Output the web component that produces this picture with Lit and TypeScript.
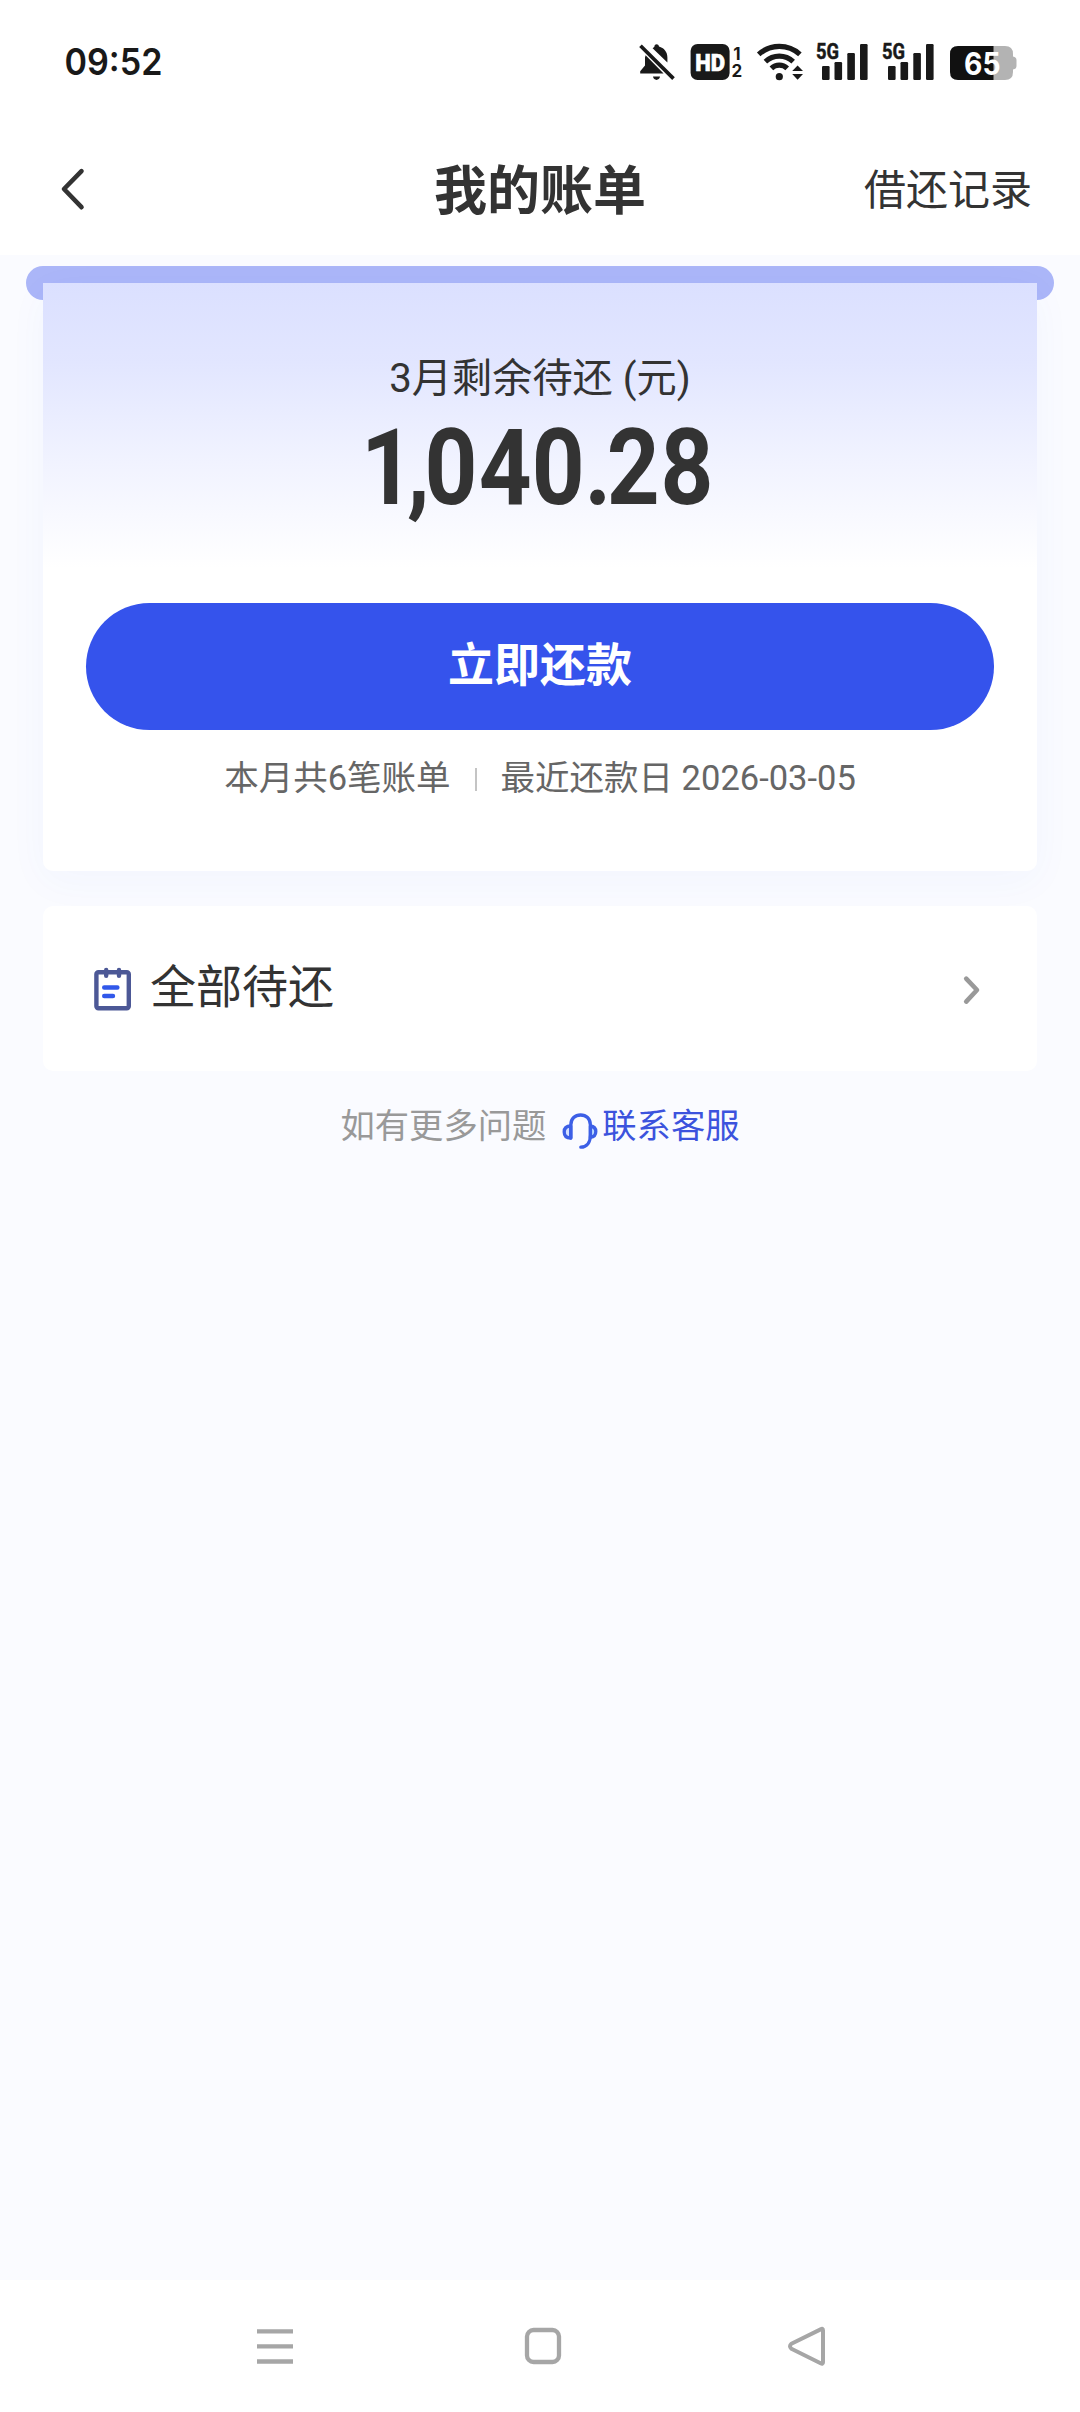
import { LitElement, html, css } from "lit";
import { customElement, property } from "lit/decorators.js";

@customElement("status-bar")
class StatusBar extends LitElement {
  static styles = css`
    :host {
      display: flex;
      justify-content: space-between;
      height: 125px;
      padding: 35px 63px 0 61px;
      box-sizing: border-box;
    }
    svg { display: block; overflow: visible; }
    .icons { display: flex; align-items: flex-start; margin-top: 8px; }
    .bell { margin-right: 15px; }
    .hd { margin-right: 14px; }
    .wifi { margin-right: 8px; }
    .signal { margin-right: 9px; }
    .last { margin-right: 14px; }
    text { font-family: Roboto, "Liberation Sans", sans-serif; font-weight: 700; fill: #191919; }
    .clock { font-family: Inter, sans-serif; font-weight: 600; font-size: 36.5px; }
    .hdtext { font-weight: 900; font-size: 24px; fill: #fff; stroke: #fff; stroke-width: 0.6; }
    .sim { font-family: Inter, sans-serif; font-weight: 700; font-size: 17px; }
    .gen { stroke: #191919; stroke-width: 0.5; }
    .level { font-family: Inter, sans-serif; font-weight: 700; font-size: 31px; fill: #fff; }
  `;

  private signal(last = false) {
    return html`<svg class="signal ${last ? "last" : ""}" width="57" height="38" viewBox="-4 0 57 38">
      <text class="gen" x="0" y="16.4" font-size="22.5" textLength="23" lengthAdjust="spacingAndGlyphs">5G</text>
      <g fill="#191919">
        <rect x="6" y="23" width="7.6" height="14" rx="1.2" />
        <rect x="18.5" y="19" width="7.6" height="18" rx="1.2" />
        <rect x="31.3" y="10" width="7.6" height="27" rx="1.2" />
        <rect x="44" y="1" width="7.6" height="36" rx="1.2" />
      </g>
    </svg>`;
  }

  render() {
    return html`
      <svg width="110" height="54" viewBox="-4 -8 110 54">
        <text class="clock" x="-0.5" y="32.3" textLength="98" lengthAdjust="spacingAndGlyphs">09:52</text>
      </svg>
      <div class="icons">
        <svg class="bell" width="36" height="38" viewBox="0 0 36 38">
          <path fill="#191919" d="M13.6 5.2 C14.6 4.5 15.3 4.2 15.4 3.6 C15.6 0.4 19.6 0.4 20 3.6 C25 5 28.4 9 28.4 14.6 V19.6 Z
            M6.6 12.2 L24.6 30.6 H1.2 V28.2 L6 22.6 V14.6 Z" />
          <path fill="#191919" d="M14 33.6 H21 C20.4 38 14.6 38 14 33.6 Z" />
          <path stroke="#191919" stroke-width="3.7" d="M1.5 2.8 L34.5 35.6" />
        </svg>
        <svg class="hd" width="53" height="38" viewBox="0 0 53 38">
          <rect x="0.6" y="1" width="39" height="36" rx="7" fill="#191919" />
          <text class="hdtext" x="5.2" y="27.8" textLength="29.8" lengthAdjust="spacingAndGlyphs">HD</text>
          <text class="sim" x="43.2" y="16.6">1</text>
          <text class="sim" x="41.6" y="34.4">2</text>
        </svg>
        <svg class="wifi" width="47" height="38" viewBox="0 0 47 38">
          <g fill="none" stroke="#191919" stroke-width="5.2">
            <path d="M1.7 11.4 A30.5 30.5 0 0 1 42.9 11.4" />
            <path d="M8.4 18.6 A20.5 20.5 0 0 1 36.2 18.6" />
            <path d="M14.4 25.4 A11.3 11.3 0 0 1 30.2 25.4" />
          </g>
          <circle cx="22.3" cy="33.7" r="3.6" fill="#191919" />
          <path fill="#191919" d="M40.6 22.6 L46 28 H35.2 Z M40.6 36.8 L35.2 31 H46 Z" />
        </svg>
        ${this.signal()}${this.signal(true)}
        <svg width="68" height="38" viewBox="0 0 68 38">
          <path fill="#b3b3b3" d="M40 3 H56 Q64 3 64 11 V13.5 Q67.5 14 67.5 17 V23 Q67.5 26 64 26.5 V29 Q64 37 56 37 H40 Z" />
          <path fill="#111" d="M9 3 H44.5 V37 H9 Q1 37 1 29 V11 Q1 3 9 3 Z" />
          <text class="level" x="15" y="31.5" textLength="36.5" lengthAdjust="spacingAndGlyphs">65</text>
        </svg>
      </div>
    `;
  }
}

@customElement("page-header")
class PageHeader extends LitElement {
  @property() heading = "";
  @property() action = "";
  static styles = css`
    :host {
      display: grid;
      grid-template-columns: 1fr auto 1fr;
      align-items: center;
      height: 130px;
      padding: 0 48px 0 60px;
      box-sizing: border-box;
      color: #333;
    }
    svg { display: block; margin-top: -2px; }
    .title { margin: 4px 0 0 -12px; font-size: 53px; font-weight: 700; line-height: 60px; }
    .action { justify-self: end; margin-top: 2px; font-size: 42px; line-height: 60px; }
  `;
  render() {
    return html`
      <svg width="26" height="46" viewBox="0 0 26 46">
        <path d="M21.5 5.2 L4 23 L21.5 41.2" fill="none" stroke="#333" stroke-width="4.6" stroke-linecap="round" stroke-linejoin="round" />
      </svg>
      <h1 class="title">${this.heading}</h1>
      <span class="action">${this.action}</span>
    `;
  }
}

@customElement("bill-card")
class BillCard extends LitElement {
  static styles = css`
    :host { display: block; padding: 11px 26px 0; }
    .slot { height: 34px; border-radius: 17px; background: #abb6f8; }
    .card {
      position: relative;
      display: flex;
      flex-direction: column;
      align-items: center;
      height: 588px;
      margin: -17px 17px 0;
      padding: 68px 43px 0;
      box-sizing: border-box;
      border-radius: 0 0 10px 10px;
      background: linear-gradient(#dbe0ff 0, #e2e6ff 80px, #f1f3ff 180px, #fff 285px);
      box-shadow: 0 10px 40px rgba(60, 90, 230, 0.04);
    }
    .label { font-size: 40.2px; line-height: 56px; color: #333; }
    .amount { display: block; margin-top: 14px; overflow: visible; }
    .amount text { font-family: Roboto, sans-serif; font-weight: 700; font-size: 106px; fill: #333; }
    .pay {
      align-self: stretch;
      height: 127px;
      margin-top: 72px;
      border: 0;
      border-radius: 64px;
      background: #3553ec;
      color: #fff;
      font: 700 46px/120px Roboto, "Noto Sans CJK SC", sans-serif;
      padding: 0 0 4px;
    }
    .info { display: flex; align-items: center; margin-top: 23px; font-size: 34.5px; line-height: 50px; color: #666; }
    .rule { width: 2px; height: 23px; margin: 2px 24px 0; background: #c4c4c4; }
  `;
  render() {
    return html`
      <div class="slot"></div>
      <div class="card">
        <div class="label">3月剩余待还 (元)</div>
        <svg class="amount" width="346" height="110" viewBox="0 0 346 110">
          <text transform="scale(0.87 1)" y="83" x="-7 46 66 128.5 189.5 250 275.5 337.5">${"1,040.28"}</text>
        </svg>
        <button class="pay">立即还款</button>
        <div class="info"><span>本月共6笔账单</span><i class="rule"></i><span>最近还款日 2026-03-05</span></div>
      </div>
    `;
  }
}

@customElement("all-bills-row")
class AllBillsRow extends LitElement {
  static styles = css`
    :host {
      display: flex;
      align-items: center;
      height: 165px;
      margin: 35px 43px 0;
      padding: 0 56px 0 50px;
      box-sizing: border-box;
      border-radius: 10px;
      background: #fff;
      position: relative;
    }
    svg { display: block; }
    .arrow { margin-top: 3px; }
    .text { flex: 1; margin: -3px 0 0 17px; font-size: 46px; line-height: 60px; color: #333; }
  `;
  render() {
    return html`
      <svg width="40" height="46" viewBox="0 0 40 46">
        <rect x="3.4" y="6.2" width="32.4" height="36" rx="2" fill="none" stroke="#4c5896" stroke-width="4.4" />
        <path d="M13.2 4 V9.8 M26 4 V9.8" stroke="#4c5896" stroke-width="4.4" stroke-linecap="round" />
        <path d="M11.2 21.5 H24.4 M11.2 30 H20" stroke="#3158ea" stroke-width="4.4" stroke-linecap="round" />
      </svg>
      <span class="text">全部待还</span>
      <svg class="arrow" width="20" height="32" viewBox="0 0 20 32">
        <path d="M5.2 4.6 L16 16 L5.2 27.6" fill="none" stroke="#999" stroke-width="4.6" stroke-linecap="round" stroke-linejoin="round" />
      </svg>
    `;
  }
}

@customElement("system-nav")
class SystemNav extends LitElement {
  static styles = css`
    :host {
      display: flex;
      align-items: flex-start;
      justify-content: space-between;
      height: 132px;
      padding: 45px 253px 0 255px;
      box-sizing: border-box;
      background: #fff;
    }
    svg { display: block; }
    .home { margin-left: 3px; }
  `;
  render() {
    return html`
      <svg width="40" height="42" viewBox="0 0 40 42">
        <path d="M2 6.3 H38 M2 21.3 H38 M2 36.5 H38" stroke="#a6a6a6" stroke-width="4.3" />
      </svg>
      <svg class="home" width="40" height="42" viewBox="0 0 40 42">
        <rect x="4" y="5" width="32" height="32" rx="6.5" fill="none" stroke="#a6a6a6" stroke-width="4.3" />
      </svg>
      <svg width="40" height="42" viewBox="0 0 40 42">
        <path d="M33.6 4.4 Q36 2.8 36 5.4 V37.2 Q36 39.8 33.6 38.2 L4.4 23.8 Q1.6 21.3 4.4 18.8 Z" fill="none" stroke="#a6a6a6" stroke-width="4" stroke-linejoin="round" />
      </svg>
    `;
  }
}

@customElement("app-root")
class AppRoot extends LitElement {
  static styles = css`
    :host {
      display: flex;
      flex-direction: column;
      width: 1080px;
      height: 2412px;
      overflow: hidden;
      background: #fafbff;
      font-family: Roboto, "Noto Sans CJK SC", sans-serif;
    }
    .top { background: #fff; }
    .main { flex: 1; }
    .help {
      display: flex;
      align-items: center;
      justify-content: center;
      margin-top: 30px;
      font-size: 34.3px;
      line-height: 50px;
      color: #999;
    }
    .headset { display: block; margin: 9px 3px 0 15px; }
    .link { color: #3c53dd; }
  `;
  render() {
    return html`
      <div class="top">
        <status-bar></status-bar>
        <page-header heading="我的账单" action="借还记录"></page-header>
      </div>
      <div class="main">
        <bill-card></bill-card>
        <all-bills-row></all-bills-row>
        <div class="help">
          <span>如有更多问题</span>
          <svg class="headset" width="38" height="38" viewBox="0 0 38 38">
            <g fill="none" stroke="#3c5fe6" stroke-width="3.3" stroke-linecap="round" stroke-linejoin="round">
              <path fill="#d3e0ff" d="M9.8 14 C5.2 14 3.2 16.4 3.2 20 S5.2 26 9.8 26 Z" />
              <path fill="#bcdcff" d="M29.4 14 C33.2 14.4 34.8 16.6 34.8 19.6 S33.2 25 29.4 25.4 Z" />
              <path d="M9.8 26 V13 C9.8 6.5 14.2 3 19.6 3 S29.4 6.5 29.4 13 V23 C29.4 30 26 35 19.8 35.2" />
            </g>
          </svg>
          <span class="link">联系客服</span>
        </div>
      </div>
      <system-nav></system-nav>
    `;
  }
}
